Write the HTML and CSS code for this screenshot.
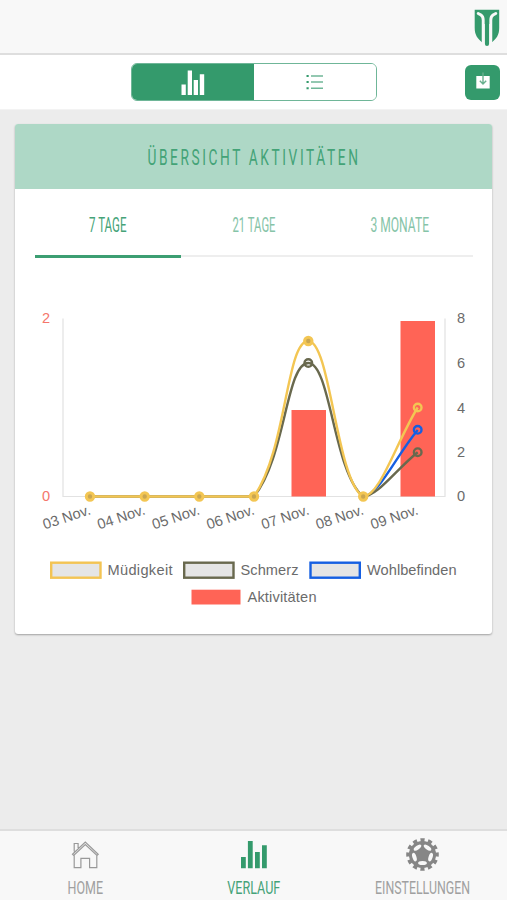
FILE: index.html
```html
<!DOCTYPE html>
<html lang="de">
<head>
<meta charset="utf-8">
<title>Verlauf</title>
<link rel="stylesheet" href="styles.css">
</head>
<body>
<div class="app">
  <header class="topbar">
    <svg class="logo" width="26" height="38" viewBox="0 0 26 38">
      <path class="green" d="M.7.7H25.2V19C25.2 26 22.5 29.5 17.7 33.5V15H15.2V34.5Q15 37 13 37T10.8 34.5V15H8.3V33.5C3.5 29.5.7 26 .7 19Z"/>
      <path class="logo-line" d="M4.2 4.4L7 6Q9.2 7.6 9.2 11V34.5M21.8 4.4L19 6Q16.8 7.6 16.8 11V34.5"/>
    </svg>
  </header>
  <div class="toolbar">
    <div class="segment">
      <button class="seg active" aria-label="Diagramm"><svg width="24" height="25" viewBox="0 0 24 25"><path d="M.5 14.5h4.3V25H.5zM6.7.5H11V25H6.7zM12.7 10H17v15h-4.3zM18.8 4.3h4.4V25h-4.4z"/></svg></button>
      <button class="seg" aria-label="Liste"><svg width="18" height="16" viewBox="0 0 18 16"><path class="list-lines" d="M5 2h12M5 8h12M5 14.2h12"/><path class="list-dots" d="M.5 2h2.2M.5 8h2.2M.5 14.2h2.2"/></svg></button>
    </div>
    <button class="export" aria-label="Exportieren"><svg width="16" height="19" viewBox="0 0 16 19"><path fill="#fff" d="M1.3 5h13.4v12.5H1.3z"/><path class="arrow" d="M8 1.5v11.5M4.8 9.8L8 13l3.2-3.2"/></svg></button>
  </div>
  <main>
    <section class="card">
      <h1><svg width="477" height="64"><text class="title" x="132.5" y="40.5" textLength="213" lengthAdjust="spacingAndGlyphs">ÜBERSICHT AKTIVITÄTEN</text></svg></h1>
      <nav class="tabs">
        <a class="tab selected"><svg width="146" height="66"><text x="54" y="43" textLength="37.5" lengthAdjust="spacingAndGlyphs">7 TAGE</text></svg></a>
        <a class="tab"><svg width="146" height="66"><text x="51.5" y="43" textLength="43" lengthAdjust="spacingAndGlyphs">21 TAGE</text></svg></a>
        <a class="tab"><svg width="146" height="66"><text x="43.5" y="43" textLength="58.5" lengthAdjust="spacingAndGlyphs">3 MONATE</text></svg></a>
      </nav>
      <svg class="chart" width="477" height="360" viewBox="15 270 477 360">
        <path class="axis" d="M63 318.5V496.5H445V318.5"/>
        <path class="bar" d="M291.5 410H326v86.5h-34.5zM400.5 321H435v175.5h-34.5z"/>
        <g class="series blue">
          <path d="M363 496.5C378 496.5 396 456 417.7 430"/>
          <circle cx="417.7" cy="429.8" r="3.8"/>
        </g>
        <g class="series olive">
          <path d="M90 496.5H254C285.7 457.4 286.2 363 308.3 363S333.6 472 363 496.5C377.3 496.5 396 469.6 417.7 452.2"/>
          <circle cx="308.3" cy="363" r="3.8"/><circle cx="417.7" cy="452.2" r="3.8"/>
        </g>
        <g class="series yellow">
          <path d="M90 496.5H254C286.7 450 286.2 341 308.3 341S336.2 480 363 496.5C380 496.5 396 442.6 417.7 407.5"/>
          <g class="stacked"><circle cx="90" cy="496.5" r="3.7"/><circle cx="144.7" cy="496.5" r="3.7"/><circle cx="199.3" cy="496.5" r="3.7"/><circle cx="254" cy="496.5" r="3.7"/><circle cx="308.3" cy="341" r="3.7"/><circle cx="363.2" cy="496.5" r="3.7"/></g>
          <circle cx="417.7" cy="407.5" r="3.8"/>
        </g>
        <g class="ticks red"><text x="42" y="323.3">2</text><text x="42" y="501.3">0</text></g>
        <g class="ticks"><text x="457" y="323.3">8</text><text x="457" y="368">6</text><text x="457" y="412.5">4</text><text x="457" y="457">2</text><text x="457" y="501.3">0</text></g>
        <g class="ticks dates">
          <text transform="translate(91.5 514)rotate(-18.5)">03 Nov.</text>
          <text transform="translate(146 514)rotate(-18.5)">04 Nov.</text>
          <text transform="translate(200.7 514)rotate(-18.5)">05 Nov.</text>
          <text transform="translate(255.3 514)rotate(-18.5)">06 Nov.</text>
          <text transform="translate(310 514)rotate(-18.5)">07 Nov.</text>
          <text transform="translate(364.5 514)rotate(-18.5)">08 Nov.</text>
          <text transform="translate(419.2 514)rotate(-18.5)">09 Nov.</text>
        </g>
        <g class="keys">
          <rect class="k-yellow" x="51.2" y="562.7" width="49.3" height="15"/>
          <rect class="k-olive" x="184.2" y="562.7" width="49.3" height="15"/>
          <rect class="k-blue" x="310.5" y="562.7" width="49.3" height="15"/>
        </g>
        <rect class="bar" x="191.5" y="589.7" width="49" height="14.8"/>
        <g class="ticks">
          <text x="107.5" y="575" textLength="65">Müdigkeit</text>
          <text x="240.5" y="575" textLength="58">Schmerz</text>
          <text x="367" y="575" textLength="89.5">Wohlbefinden</text>
          <text x="247.5" y="602" textLength="69">Aktivitäten</text>
        </g>
      </svg>
    </section>
  </main>
  <footer>
    <a class="item"><svg width="169" height="69" viewBox="0 831 169 69">
      <path class="house" d="M72.5 854.2L85.3 842l12.9 12.2-1.2 1.2-11.7-10.9-11.6 10.9zM74.2 851.5v-8h3.9v4.5M74.2 855.5v12.2h6.7v-9.3h8.7v9.3h7.2v-12.2"/>
      <text x="67.5" y="894" textLength="35.5" lengthAdjust="spacingAndGlyphs">HOME</text></svg></a>
    <a class="item current"><svg width="169" height="69" viewBox="169 831 169 69">
      <path class="green" d="M241 857h4.8v11.3H241zM247.9 841h4.8v27.3h-4.8zM255 852h4.8v16.3H255zM262 845.3h4.8v23H262z"/>
      <text x="227.3" y="894" textLength="53" lengthAdjust="spacingAndGlyphs">VERLAUF</text></svg></a>
    <a class="item"><svg width="169" height="69" viewBox="338 831 169 69">
      <g transform="translate(422.5 854.5)">
        <circle class="teeth" r="14.5" pathLength="120"/>
        <circle class="gear" r="13.6"/>
        <g class="holes">
          <ellipse cy="8.5" rx="4.4" ry="2"/>
          <ellipse cy="8.5" rx="4.4" ry="2" transform="rotate(72)"/>
          <ellipse cy="8.5" rx="4.4" ry="2" transform="rotate(144)"/>
          <ellipse cy="8.5" rx="4.4" ry="2" transform="rotate(216)"/>
          <ellipse cy="8.5" rx="4.4" ry="2" transform="rotate(288)"/>
        </g>
      </g>
      <text x="375" y="894" textLength="95" lengthAdjust="spacingAndGlyphs">EINSTELLUNGEN</text></svg></a>
  </footer>
</div>
</body>
</html>
```
FILE: styles.css
```css
* { box-sizing: border-box; }
body { margin: 0; background: #ececec; font-family: "Liberation Sans", sans-serif; }
svg { display: block; overflow: visible; }
button { padding: 0; border: 0; }
.app { height: 900px; display: flex; flex-direction: column; }
.topbar { height: 55px; padding: 9px 7px 0 0; display: flex; justify-content: flex-end; background: #f8f8f8; border-bottom: 2px solid #dedede; }
.green { fill: #349a6c; }
.logo-line { fill: none; stroke: #f8f8f8; stroke-width: 2.9; stroke-linecap: round; }
.toolbar { height: 55px; display: grid; grid-template-columns: 131px 246px 1fr; align-items: start; background: #fff; border-bottom: 1px solid #f3f3f3; }
.segment { grid-column: 2; margin-top: 8px; height: 38px; display: flex; border: 1.5px solid #6fb698; border-radius: 6px; overflow: hidden; }
.seg { flex: 1; display: flex; align-items: center; justify-content: center; background: #fff; }
.seg.active { background: #349a6c; fill: #fff; }
.list-lines, .list-dots { fill: none; stroke: #70b798; stroke-width: 1.4; }
.list-dots { stroke: #349a6c; stroke-width: 2; }
.export { justify-self: end; margin: 10px 7px 0 0; width: 35px; height: 35px; display: flex; align-items: center; justify-content: center; border-radius: 6px; background: #349a6c; }
.export svg { margin-top: -4px; }
.arrow { fill: none; stroke: #68b08e; stroke-width: 1.4; }
main { flex: 1; padding: 14px 15px 0; }
.card { height: 510px; background: #fff; border-radius: 3px; overflow: hidden; box-shadow: 0 1px 2px rgba(0,0,0,.32); }
h1 { margin: 0; height: 65px; background: #aed8c6; }
.title, .tab text, .item text { font-family: Roboto, sans-serif; font-weight: 400; }
.title { font-size: 22px; letter-spacing: 4.2px; fill: #43a377; }
.tabs { display: flex; margin: 0 19px 0 20px; height: 69px; }
.tab { flex: 1; border-bottom: 2px solid #eee; height: 68px; }
.tab text { font-size: 20.5px; fill: #86c4a8; }
.tab.selected { border-bottom: 3px solid #3c9e72; height: 69px; }
.tab.selected text { fill: #45a378; }
.chart { margin-top: 12px; }
.axis { fill: none; stroke: #e2e2e2; stroke-width: 1.2; }
.bar { fill: #ff6456; }
.series { fill: none; stroke-width: 2.4; stroke-linejoin: round; }
.blue { stroke: #155fe2; }
.olive { stroke: #69694e; }
.yellow { stroke: #f3c653; }
.stacked { fill: #c9a652; stroke-width: 3; }
.ticks { font-size: 14.6px; fill: #6b6b6b; }
.ticks.red { fill: #f5766b; }
.dates { text-anchor: end; }
.keys { fill: #e5e5e5; stroke-width: 2.4; }
.k-yellow { stroke: #f3c453; }
.k-olive { stroke: #69694e; }
.k-blue { stroke: #155fe2; }
footer { height: 71px; display: flex; background: #f8f8f8; border-top: 2px solid #dedede; }
.item { flex: 1; }
.item text { font-size: 19.2px; fill: #a0a0a0; }
.item.current text { fill: #45a378; }
.house { fill: none; stroke: #999; stroke-width: 1.2; }
.gear { fill: #868686; }
.teeth { fill: none; stroke: #868686; stroke-width: 3.6; stroke-dasharray: 5.5 4.5; stroke-dashoffset: 2.7; }
.holes { fill: #f8f8f8; }
```
